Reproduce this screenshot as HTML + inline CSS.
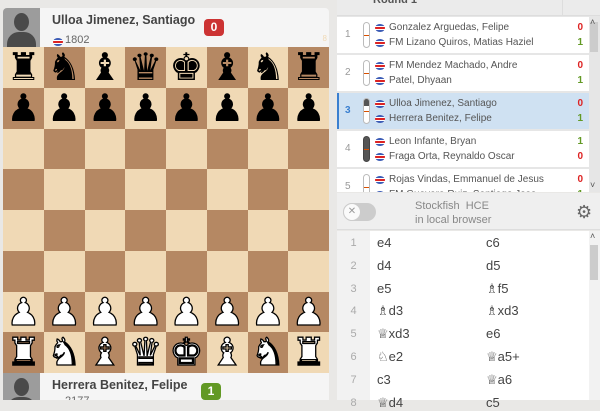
<!DOCTYPE html><html><head><style>
*{margin:0;padding:0;box-sizing:border-box}
body{width:600px;height:400px;overflow:hidden;background:#e9e8e6;font-family:"Liberation Sans","DejaVu Sans",sans-serif;position:relative}
.abs{position:absolute}
.ph{position:absolute;left:3px;width:326px;height:39px;background:#f5f5f5;border-radius:4px 4px 0 0;overflow:hidden}
.av{position:absolute;left:0;top:0;width:37px;height:39px;background:#9c9c9c;overflow:hidden}
.av:before{content:"";position:absolute;left:11px;top:5px;width:15px;height:18px;border-radius:50%;background:#4a4a4a}
.av:after{content:"";position:absolute;left:4px;top:24px;width:29px;height:20px;border-radius:12px 12px 0 0;background:#4a4a4a}
.nm{position:absolute;left:49px;font-weight:bold;color:#444;font-size:12.5px}
.rt{position:absolute;left:62px;font-size:11px;color:#666}
.fl{position:absolute;width:10px;height:8px;border-radius:50%;background:linear-gradient(#3b5bb5 0 25%,#fff 25% 35%,#d22 35% 65%,#fff 65% 75%,#3b5bb5 75%)}
.bd{position:absolute;width:20px;height:17px;border-radius:4px;color:#fff;font-weight:bold;font-size:12px;text-align:center;line-height:17px}
#board{position:absolute;left:3px;top:47px;width:326px;height:326px;display:grid;grid-template-columns:repeat(8,1fr);grid-template-rows:repeat(8,1fr)}
#board div{position:relative;font-family:"DejaVu Sans",sans-serif;font-size:38px;line-height:40px;text-align:center}
.l{background:#f0d9b5}.d{background:#b58863}
.b{color:#000}.w{color:#fff;-webkit-text-stroke:1.3px #000}
.co{position:absolute;font-size:8px;font-family:"Liberation Sans",sans-serif;-webkit-text-stroke:0}
.it{position:absolute;left:337px;width:252px;height:36px;background:#fff;font-size:10px;color:#555}
.it .n{position:absolute;left:8px;top:12px;color:#999;font-size:10px}
.it .bar{position:absolute;left:26px;top:5px;width:7px;height:26px;border:1px solid #bbb;border-radius:4px;background:#fff}
.it .bar:after{content:"";position:absolute;left:0;right:0;top:12px;height:1px;background:#d85000}
.it .p1,.it .p2{position:absolute;left:52px}
.it .p1{top:5px}.it .p2{top:20px}
.it .f1,.it .f2{left:38px}.it .f1{top:7px}.it .f2{top:22px}
.it .s1,.it .s2{position:absolute;right:6px;font-weight:bold}
.it .s1{top:5px}.it .s2{top:20px}
.r{color:#d22}.g{color:#629924}
.mv{position:absolute;font-size:13px;color:#444}
.mn{position:absolute;left:337px;width:33px;text-align:center;font-size:11px;color:#aaa}
</style></head><body>
<div class="ph" style="top:8px"><div class="av"></div><div class="nm" style="top:5px">Ulloa Jimenez, Santiago</div><div class="fl" style="left:50px;top:30px"></div><div class="rt" style="top:26px">1802</div><div class="bd" style="left:201px;top:11px;background:#cc3333">0</div></div>
<div id="board"></div>
<div class="ph" style="top:373px;border-radius:0;height:27px"><div class="av"></div><div class="nm" style="top:5px">Herrera Benitez, Felipe</div><div class="bd" style="left:198px;top:10px;background:#629924">1</div><div class="rt" style="top:22px">2177</div></div>
<div class="abs" style="left:337px;top:0;width:263px;height:16px;background:#ebebeb;border-bottom:1px solid #ddd"></div>
<div class="abs" style="left:373px;top:-6px;font-size:11px;font-weight:bold;color:#555">Round 1</div>
<div class="abs" style="left:562px;top:0;width:1px;height:16px;background:#ddd"></div>
<div class="abs" style="left:337px;top:16px;width:263px;height:176px;background:#e6e6e6"></div>
<div class="abs" style="left:590px;top:22px;width:8px;height:30px;background:#ccc"></div>
<div class="abs" style="left:590px;top:17px;font-size:9px;color:#555">˄</div>
<div class="abs" style="left:590px;top:180px;font-size:9px;color:#555">˅</div>
<div class="it" style="top:17px"><span class="n">1</span><div class="bar"></div><div class="fl f1"></div><div class="fl f2"></div><span class="p1">Gonzalez Arguedas, Felipe</span><span class="p2">FM Lizano Quiros, Matias Haziel</span><span class="s1 r">0</span><span class="s2 g">1</span></div>
<div class="it" style="top:55px"><span class="n">2</span><div class="bar"></div><div class="fl f1"></div><div class="fl f2"></div><span class="p1">FM Mendez Machado, Andre</span><span class="p2">Patel, Dhyaan</span><span class="s1 r">0</span><span class="s2 g">1</span></div>
<div class="it" style="top:93px;background:#cfe1f2;border-left:2px solid #3a7fd0"><span class="n" style="color:#3a7fd0;font-weight:bold;left:6px">3</span><div class="bar" style="left:24px;background:linear-gradient(#555 0 30%,#fff 30%)"></div><div class="fl f1" style="left:36px"></div><div class="fl f2" style="left:36px"></div><span class="p1" style="left:50px">Ulloa Jimenez, Santiago</span><span class="p2" style="left:50px">Herrera Benitez, Felipe</span><span class="s1 r">0</span><span class="s2 g">1</span></div>
<div class="it" style="top:131px"><span class="n">4</span><div class="bar" style="background:#555;border-color:#444"></div><div class="fl f1"></div><div class="fl f2"></div><span class="p1">Leon Infante, Bryan</span><span class="p2">Fraga Orta, Reynaldo Oscar</span><span class="s1 g">1</span><span class="s2 r">0</span></div>
<div class="it" style="top:169px;height:23px;overflow:hidden"><span class="n">5</span><div class="bar"></div><div class="fl f1"></div><div class="fl f2"></div><span class="p1">Rojas Vindas, Emmanuel de Jesus</span><span class="p2">FM Guevara Ruiz, Santiago Jose</span><span class="s1 r">0</span><span class="s2 g">1</span></div>
<div class="abs" style="left:337px;top:193px;width:263px;height:37px;background:#efefef;border-bottom:1px solid #ddd"></div>
<div class="abs" style="left:343px;top:203px;width:33px;height:18px;border-radius:9px;background:#ccc"></div>
<div class="abs" style="left:343px;top:203px;width:18px;height:18px;border-radius:50%;background:#fafafa;border:1px solid #ccc;font-size:10px;color:#999;text-align:center;line-height:16px">✕</div>
<div class="abs" style="left:415px;top:199px;font-size:11px;color:#888;line-height:14px">Stockfish&nbsp; HCE<br>in local browser</div>
<div class="abs" style="left:576px;top:202px;font-size:18px;color:#666;font-family:'DejaVu Sans'">⚙</div>
<div class="abs" style="left:337px;top:231px;width:33px;height:169px;background:#f2f2f2"></div>
<div class="abs" style="left:370px;top:231px;width:219px;height:169px;background:#fff"></div>
<div class="abs" style="left:589px;top:231px;width:11px;height:169px;background:#f2f2f2"></div>
<div class="abs" style="left:590px;top:245px;width:8px;height:35px;background:#ccc"></div>
<div class="abs" style="left:590px;top:231px;font-size:9px;color:#555">˄</div>
<div id="moves"></div>
<script>
var b=document.getElementById('board'),h='';
var bk=['♜','♞','♝','♛','♚','♝','♞','♜'];
for(var r=0;r<8;r++)for(var c=0;c<8;c++){var l=(r+c)%2==0;var p='',cl='';
if(r==0){p=bk[c];cl='b'}if(r==1){p='♟';cl='b'}if(r==6){p='♟';cl='w'}if(r==7){p=bk[c];cl='w'}
var co='';var cc=l?'#b58863':'#f0d9b5';
if(c==7)co+='<span class="co" style="right:2px;top:-12px;color:'+cc+';line-height:1">'+(8-r)+'</span>';
if(r==7)co+='<span class="co" style="left:2px;bottom:-14px;color:'+cc+';line-height:1">'+'abcdefgh'[c]+'</span>';
h+='<div class="'+(l?'l':'d')+' '+cl+'">'+p+co+'</div>';}
b.innerHTML=h;
var mv=[['e4','c6'],['d4','d5'],['e5','♗f5'],['♗d3','♗xd3'],['♕xd3','e6'],['♘e2','♕a5+'],['c3','♕a6'],['♕d4','c5']],m='';
for(var i=0;i<8;i++){var y=235+i*22.8;m+='<div class="mn" style="top:'+(y+2)+'px">'+(i+1)+'</div><div class="mv" style="left:377px;top:'+y+'px">'+mv[i][0]+'</div><div class="mv" style="left:486px;top:'+y+'px">'+mv[i][1]+'</div>';}
document.getElementById('moves').innerHTML=m;
</script>
</body></html>
